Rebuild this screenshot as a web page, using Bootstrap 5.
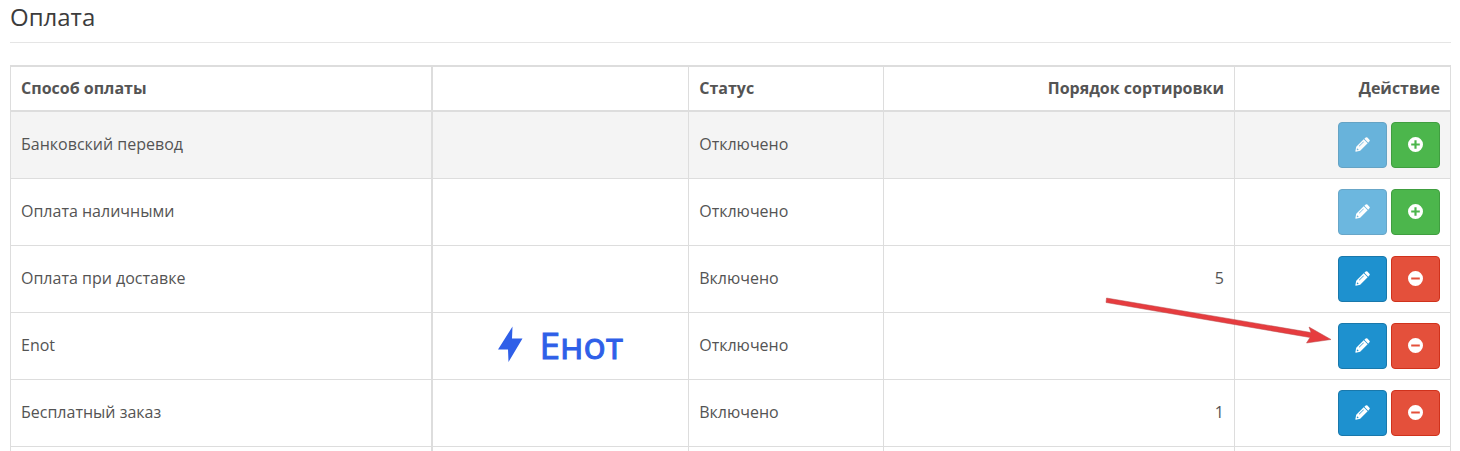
<!DOCTYPE html>
<html lang="ru">
<head>
<meta charset="utf-8">
<meta name="viewport" content="width=device-width, initial-scale=1">
<title>Оплата</title>
<link href="https://cdn.jsdelivr.net/npm/bootstrap@5.3.0/dist/css/bootstrap.min.css" rel="stylesheet">
<style>
body { font-family: "Open Sans", "Noto Sans", sans-serif; font-size: 16px; line-height: 24px; color: #545454; }
.page-main { padding: 1px 9px 0 10px; }
.page-title { font-size: 24px; line-height: 32px; font-weight: 400; color: #3c3c3c; padding-bottom: 9px; margin-bottom: 22px; border-bottom: 1px solid #e5e5e5; }
.pay-table { table-layout: fixed; border-color: #ddd; --bs-table-color: #545454; --bs-table-border-color: #ddd; }
.pay-table > tbody > tr > td { padding: 9px 10px 11px; }
.pay-table > tbody > tr > td:last-child { padding: 10px; }
.pay-table > thead > tr > th { padding: 9px 10px 10px; border-top: 2px solid #ddd; border-bottom: 2px solid #ddd; }
.pay-table tr > :first-child { border-right-width: 2px; }
.pay-table tbody tr { height: 67px; }
.pay-table .hovered { --bs-table-bg: #f4f4f4; }
.col-name { width: 29.3%; } .col-logo { width: 17.8%; } .col-status { width: 13.5%; } .col-sort { width: 24.4%; } .col-act { width: 15%; }
.btn-act { display: flex; align-items: center; justify-content: center; width: 49px; height: 46px; padding: 0 0 1px; border-radius: 4px; color: #fff; }
.btn-edit, .btn-edit:disabled { color: #fff; background: #1e91cf; border-color: #1978ab; }
.btn-add { background: #4cb64c; border-color: #409e40; }
.btn-del { background: #e4503b; border-color: #d0321c; }
.enot-logo { color: #2f5fe8; font-size: 37px; line-height: 38px; -webkit-text-stroke: 1px #2f5fe8; padding-bottom: 1px; }
.pointer-arrow { right: 100%; bottom: 18px; margin-right: 6px; }
</style>
</head>
<body class="bg-white vh-100 overflow-hidden">
<svg class="d-none" xmlns="http://www.w3.org/2000/svg">
  <symbol id="pencil" viewBox="0 0 16 16"><path fill-rule="evenodd" fill="currentColor" d="M10 1.800 11.400.600q.9-.8 1.800 0l2.200 2.200q.8.9 0 1.800L14.100 6ZM9.300 2.500l4.200 4.200L5.500 14.700.9 15.600q-.6 0-.5-.6L1.300 10.500ZM4.600 10l4.800-4.800-.4-.4L4.200 9.600ZM2.100 12.300l-.2 1.200.6.600 1.200-.2v-.8h-.8v-.8Z"/></symbol>
  <symbol id="plus" viewBox="0 0 14 14"><path fill-rule="evenodd" fill="currentColor" d="M7 0a7 7 0 1 1 0 14A7 7 0 0 1 7 0ZM6 3v3H3v2h3v3h2V8h3V6H8V3Z"/></symbol>
  <symbol id="minus" viewBox="0 0 14 14"><path fill-rule="evenodd" fill="currentColor" d="M7 0a7 7 0 1 1 0 14A7 7 0 0 1 7 0ZM3 6v2h8V6Z"/></symbol>
</svg>
<main class="page-main">
  <h1 class="page-title">Оплата</h1>
  <table class="table table-bordered align-middle pay-table">
    <colgroup><col class="col-name"><col class="col-logo"><col class="col-status"><col class="col-sort"><col class="col-act"></colgroup>
    <thead><tr><th>Способ оплаты</th><th></th><th>Статус</th><th class="text-end">Порядок сортировки</th><th class="text-end">Действие</th></tr></thead>
    <tbody>
      <tr class="hovered"><td>Банковский перевод</td><td></td><td>Отключено</td><td></td>
        <td><div class="d-flex justify-content-end gap-1"><button type="button" class="btn btn-act btn-edit" aria-label="Редактировать" disabled><svg width="15" height="15"><use href="#pencil"/></svg></button><button type="button" class="btn btn-act btn-add" aria-label="Установить"><svg width="15" height="15"><use href="#plus"/></svg></button></div></td></tr>
      <tr><td>Оплата наличными</td><td></td><td>Отключено</td><td></td>
        <td><div class="d-flex justify-content-end gap-1"><button type="button" class="btn btn-act btn-edit" aria-label="Редактировать" disabled><svg width="15" height="15"><use href="#pencil"/></svg></button><button type="button" class="btn btn-act btn-add" aria-label="Установить"><svg width="15" height="15"><use href="#plus"/></svg></button></div></td></tr>
      <tr><td>Оплата при доставке</td><td></td><td>Включено</td><td class="text-end">5</td>
        <td><div class="d-flex justify-content-end gap-1"><button type="button" class="btn btn-act btn-edit" aria-label="Редактировать"><svg width="15" height="15"><use href="#pencil"/></svg></button><button type="button" class="btn btn-act btn-del" aria-label="Удалить"><svg width="15" height="15"><use href="#minus"/></svg></button></div></td></tr>
      <tr><td>Enot</td>
        <td><div class="enot-logo d-flex justify-content-center align-items-center gap-3"><svg width="25" height="37" viewBox="0 0 25 37"><path fill="currentColor" d="M14.500.5 0 23.500h10L10.500 36 24.500 12.500H14Z"/></svg><span>Енот</span></div></td>
        <td>Отключено</td><td></td>
        <td><div class="d-flex justify-content-end gap-1"><div class="position-relative"><button type="button" class="btn btn-act btn-edit" aria-label="Редактировать"><svg width="15" height="15"><use href="#pencil"/></svg></button>
          <svg class="position-absolute pointer-arrow" width="228" height="55" viewBox="0 0 228 55"><path fill="#e63c3f" stroke="#b94a4a" stroke-width=".5" d="M2.500 2 207 36.500 205 31 227 43.500 202.500 47 206 41.500 2 6.500Z"/></svg></div><button type="button" class="btn btn-act btn-del" aria-label="Удалить"><svg width="15" height="15"><use href="#minus"/></svg></button></div></td></tr>
      <tr><td>Бесплатный заказ</td><td></td><td>Включено</td><td class="text-end">1</td>
        <td><div class="d-flex justify-content-end gap-1"><button type="button" class="btn btn-act btn-edit" aria-label="Редактировать"><svg width="15" height="15"><use href="#pencil"/></svg></button><button type="button" class="btn btn-act btn-del" aria-label="Удалить"><svg width="15" height="15"><use href="#minus"/></svg></button></div></td></tr>
      <tr><td></td><td></td><td></td><td></td><td></td></tr>
    </tbody>
  </table>
</main>
<script src="https://cdn.jsdelivr.net/npm/bootstrap@5.3.0/dist/js/bootstrap.bundle.min.js"></script>
</body>
</html>
